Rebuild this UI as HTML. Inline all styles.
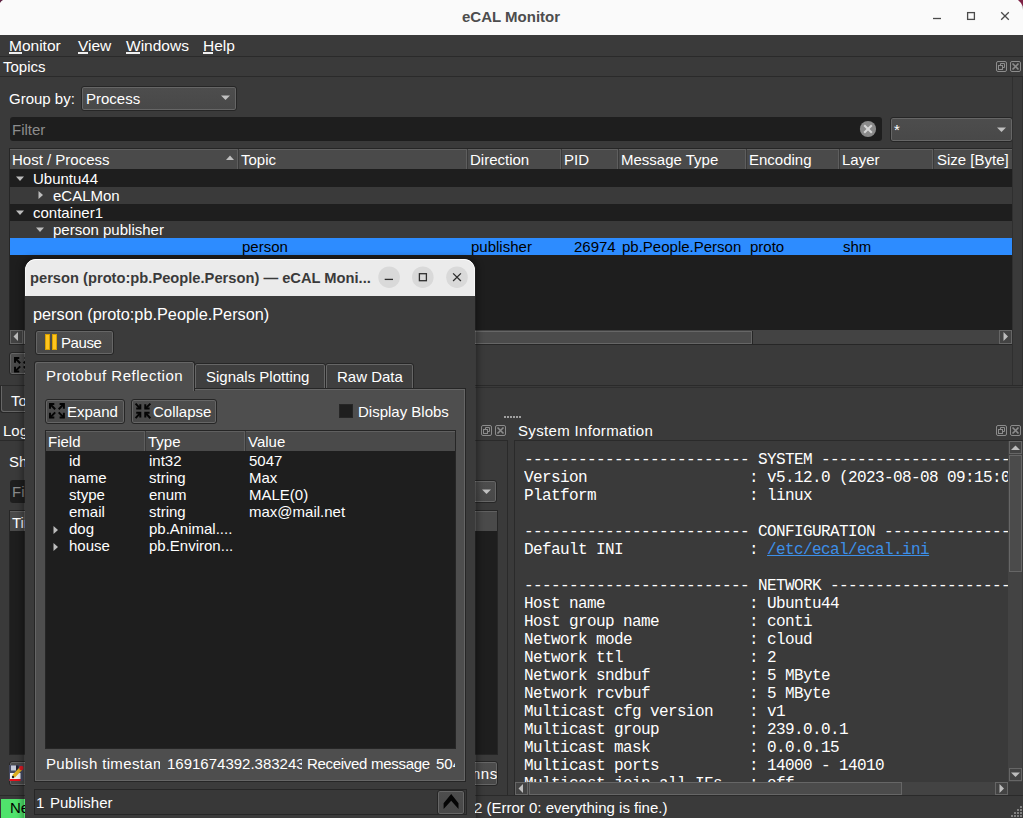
<!DOCTYPE html>
<html><head><meta charset="utf-8"><title>eCAL Monitor</title>
<style>
*{margin:0;padding:0;box-sizing:border-box}
html,body{width:1023px;height:818px;overflow:hidden;background:#3a3a3a;font-family:"Liberation Sans",sans-serif;font-size:15px;color:#fff}
.a{position:absolute}
.t{position:absolute;white-space:nowrap;line-height:17px}
.m{position:absolute;font-family:"Liberation Mono",monospace;font-size:16px;letter-spacing:-0.6px;line-height:18px;white-space:pre;overflow:hidden}
.btn{position:absolute;border:1px solid #262626;border-radius:3px;box-shadow:inset 0 0 0 1px #666666;background:linear-gradient(#4d4d4d,#484848)}
.hdr{position:absolute;background:#4a4a4a;box-shadow:inset 0 1px 0 #606060}
.dk{color:#000}
</style></head><body>
<div class="a" style="left:0px;top:0px;width:1023px;height:35px;background:#fafafa"></div>
<svg class="a" style="left:0px;top:0px" width="1023" height="12"><path d="M1018 0 L1023 0 L1023 7 Q1021.5 2.5 1018 0 Z" fill="#7d2245"/><path d="M1023 6 L1023 10 Q1022.5 8 1021.5 6.5 Z" fill="#999" opacity="0.5"/><path d="M0 0 L3 0 Q1 1 0 3 Z" fill="#5e2040"/></svg>
<div class="t" style="left:462px;top:8px;font-weight:bold;color:#4d4d4d">eCAL Monitor</div>
<svg class="a" style="left:925px;top:5px" width="95" height="25"><line x1="8" y1="13.5" x2="16" y2="13.5" stroke="#4a4a4a" stroke-width="1.3"/>
  <rect x="42.6" y="7.6" width="6.8" height="6.8" fill="none" stroke="#4a4a4a" stroke-width="1.3"/>
  <path d="M76.2 7.2 L83.8 14.8 M83.8 7.2 L76.2 14.8" stroke="#4a4a4a" stroke-width="1.3"/></svg>
<div class="a" style="left:0px;top:56px;width:1023px;height:1px;background:#2a2a2a"></div>
<div class="t" style="left:9px;top:37px;font-size:15.5px">Monitor</div>
<div class="a" style="left:9px;top:52px;width:13px;height:2px;background:#f0f0f0"></div>
<div class="t" style="left:78px;top:37px;font-size:15.5px">View</div>
<div class="a" style="left:78px;top:52px;width:10px;height:2px;background:#f0f0f0"></div>
<div class="t" style="left:126px;top:37px;font-size:15.5px">Windows</div>
<div class="a" style="left:126px;top:52px;width:14px;height:2px;background:#f0f0f0"></div>
<div class="t" style="left:203px;top:37px;font-size:15.5px">Help</div>
<div class="a" style="left:203px;top:52px;width:10px;height:2px;background:#f0f0f0"></div>
<div class="t" style="left:3px;top:58px;">Topics</div>
<div class="a" style="left:0px;top:76px;width:1023px;height:1px;background:#2a2a2a"></div>
<svg class="a" style="left:995px;top:60px" width="28" height="14"><g fill="none" stroke="#8c8c8c" stroke-width="1">
    <rect x="1.5" y="1.5" width="10" height="10" rx="1.5"/>
    <rect x="3.5" y="5.5" width="4" height="4"/>
    <path d="M5.5 5.5 V3.5 H9.5 V7.5 H7.5"/>
    <rect x="15.5" y="1.5" width="10" height="10" rx="1.5"/>
    <path d="M17.5 3.5 L23.5 9.5 M23.5 3.5 L17.5 9.5" stroke-width="1.6"/></g></svg>
<div class="t" style="left:9px;top:90px;">Group by:</div>
<div class="btn" style="left:81px;top:86px;width:156px;height:25px;"></div>
<div class="t" style="left:86px;top:90px;">Process</div>
<svg class="a" style="left:221px;top:95px" width="9" height="6"><path d="M0 0.5 H9 L4.5 5 Z" fill="#c0c0c0"/></svg>
<div class="a" style="left:10px;top:117px;width:872px;height:24px;background:#1e1e1e;border-radius:3px"></div>
<div class="t" style="left:12px;top:121px;color:#8c8c8c">Filter</div>
<svg class="a" style="left:859px;top:120px" width="18" height="18"><circle cx="9" cy="9" r="8.1" fill="#8a8a8a"/><path d="M5.2 5.2 L12.8 12.8 M12.8 5.2 L5.2 12.8" stroke="#d6d6d6" stroke-width="2.1"/></svg>
<div class="btn" style="left:890px;top:117px;width:123px;height:25px;"></div>
<div class="t" style="left:894px;top:121px;">*</div>
<svg class="a" style="left:997px;top:127px" width="9" height="6"><path d="M0 0.5 H9 L4.5 5 Z" fill="#c0c0c0"/></svg>
<div class="a" style="left:9px;top:148px;width:1004px;height:197px;background:#262626"></div>
<div class="a" style="left:10px;top:149px;width:1002px;height:181px;background:#1e1e1e"></div>
<div class="hdr" style="left:10px;top:149px;width:1002px;height:20px"></div>
<div class="a" style="left:237px;top:149px;width:1px;height:20px;background:#5e5e5e"></div>
<div class="a" style="left:238px;top:149px;width:1px;height:20px;background:#3a3a3a"></div>
<div class="a" style="left:466px;top:149px;width:1px;height:20px;background:#5e5e5e"></div>
<div class="a" style="left:467px;top:149px;width:1px;height:20px;background:#3a3a3a"></div>
<div class="a" style="left:560px;top:149px;width:1px;height:20px;background:#5e5e5e"></div>
<div class="a" style="left:561px;top:149px;width:1px;height:20px;background:#3a3a3a"></div>
<div class="a" style="left:617px;top:149px;width:1px;height:20px;background:#5e5e5e"></div>
<div class="a" style="left:618px;top:149px;width:1px;height:20px;background:#3a3a3a"></div>
<div class="a" style="left:745px;top:149px;width:1px;height:20px;background:#5e5e5e"></div>
<div class="a" style="left:746px;top:149px;width:1px;height:20px;background:#3a3a3a"></div>
<div class="a" style="left:838px;top:149px;width:1px;height:20px;background:#5e5e5e"></div>
<div class="a" style="left:839px;top:149px;width:1px;height:20px;background:#3a3a3a"></div>
<div class="a" style="left:932px;top:149px;width:1px;height:20px;background:#5e5e5e"></div>
<div class="a" style="left:933px;top:149px;width:1px;height:20px;background:#3a3a3a"></div>
<div class="t" style="left:12px;top:151px;">Host / Process</div>
<div class="t" style="left:241px;top:151px;">Topic</div>
<div class="t" style="left:470px;top:151px;">Direction</div>
<div class="t" style="left:564px;top:151px;">PID</div>
<div class="t" style="left:621px;top:151px;">Message Type</div>
<div class="t" style="left:749px;top:151px;">Encoding</div>
<div class="t" style="left:842px;top:151px;">Layer</div>
<div class="t" style="left:937px;top:151px;">Size [Byte]</div>
<svg class="a" style="left:226px;top:155px" width="8" height="6"><path d="M0 5 H8 L4.0 0.5 Z" fill="#c0c0c0"/></svg>
<div class="a" style="left:10px;top:169px;width:1002px;height:1px;background:#1e1e1e"></div>
<div class="a" style="left:10px;top:170px;width:1002px;height:17px;background:#1e1e1e"></div>
<div class="a" style="left:10px;top:187px;width:1002px;height:17px;background:#3a3a3a"></div>
<div class="a" style="left:10px;top:204px;width:1002px;height:17px;background:#1e1e1e"></div>
<div class="a" style="left:10px;top:221px;width:1002px;height:17px;background:#3a3a3a"></div>
<div class="a" style="left:10px;top:238px;width:1002px;height:17px;background:#2d8cff"></div>
<svg class="a" style="left:16px;top:176px" width="8" height="6"><path d="M0 0.5 H8 L4.0 5 Z" fill="#bdbdbd"/></svg>
<svg class="a" style="left:38px;top:191px" width="6" height="8"><path d="M0.5 0 V8 L5 4.0 Z" fill="#bdbdbd"/></svg>
<svg class="a" style="left:16px;top:210px" width="8" height="6"><path d="M0 0.5 H8 L4.0 5 Z" fill="#bdbdbd"/></svg>
<svg class="a" style="left:36px;top:227px" width="8" height="6"><path d="M0 0.5 H8 L4.0 5 Z" fill="#bdbdbd"/></svg>
<div class="t" style="left:33px;top:170px;">Ubuntu44</div>
<div class="t" style="left:53px;top:187px;">eCALMon</div>
<div class="t" style="left:33px;top:204px;">container1</div>
<div class="t" style="left:53px;top:221px;">person publisher</div>
<div class="t dk" style="left:242px;top:238px;">person</div>
<div class="t dk" style="left:471px;top:238px;">publisher</div>
<div class="t dk" style="left:574px;top:238px;">26974</div>
<div class="t dk" style="left:622px;top:238px;">pb.People.Person</div>
<div class="t dk" style="left:750px;top:238px;">proto</div>
<div class="t dk" style="left:843px;top:238px;">shm</div>
<div class="a" style="left:10px;top:330px;width:1002px;height:14px;background:#434343"></div>
<div class="a" style="left:10px;top:330px;width:13px;height:14px;background:#434343;box-shadow:inset 0 0 0 1px #666666"></div>
<svg class="a" style="left:13px;top:332px" width="6" height="9"><path d="M5 0 V9 L0.5 4.5 Z" fill="#bdbdbd"/></svg>
<div class="a" style="left:24px;top:331px;width:728px;height:13px;background:#4b4b4b;box-shadow:inset 0 0 0 1px #666666"></div>
<div class="a" style="left:752px;top:331px;width:1px;height:13px;background:#262626"></div>
<div class="a" style="left:999px;top:330px;width:13px;height:14px;background:#434343;box-shadow:inset 0 0 0 1px #666666"></div>
<svg class="a" style="left:1003px;top:332px" width="6" height="9"><path d="M0.5 0 V9 L5 4.5 Z" fill="#bdbdbd"/></svg>
<div class="a" style="left:1012px;top:77px;width:1px;height:309px;background:#2f2f2f"></div>
<div class="a" style="left:1022px;top:77px;width:1px;height:309px;background:#2f2f2f"></div>
<div class="btn" style="left:9px;top:352px;width:32px;height:23px;"></div>
<svg class="a" style="left:13px;top:356px" width="18" height="18"><g fill="none" stroke="#050505" stroke-width="2" stroke-linejoin="miter">
  <path d="M6.3 2 H2 V6.8"/><path d="M2 2 L7.2 7.2"/>
  <path d="M11.6 2 H15.9 V6.8"/><path d="M15.9 2 L10.7 7.2"/>
  <path d="M6.3 15.6 H2 V10.8"/><path d="M2 15.6 L7.2 10.4"/>
  <path d="M11.6 15.6 H15.9 V10.8"/><path d="M15.9 15.6 L10.7 10.4"/></g></svg>
<div class="a" style="left:0px;top:385px;width:1023px;height:1px;background:#2a2a2a"></div>
<div class="a" style="left:0px;top:387px;width:1023px;height:1px;background:#2e2e2e"></div>
<div class="a" style="left:0px;top:386px;width:90px;height:27px;background:#3b3b3b;border:1px solid #262626;border-top:none;box-shadow:inset 1px -1px 0 #666666,inset -1px 0 0 #666666;border-radius:0 0 3px 3px"></div>
<div class="t" style="left:11px;top:392px;">Topics</div>
<div class="t" style="left:3px;top:422px;">Logging</div>
<svg class="a" style="left:480px;top:424px" width="28" height="14"><g fill="none" stroke="#8c8c8c" stroke-width="1">
    <rect x="1.5" y="1.5" width="10" height="10" rx="1.5"/>
    <rect x="3.5" y="5.5" width="4" height="4"/>
    <path d="M5.5 5.5 V3.5 H9.5 V7.5 H7.5"/>
    <rect x="15.5" y="1.5" width="10" height="10" rx="1.5"/>
    <path d="M17.5 3.5 L23.5 9.5 M23.5 3.5 L17.5 9.5" stroke-width="1.6"/></g></svg>
<div class="a" style="left:0px;top:440px;width:508px;height:1px;background:#2a2a2a"></div>
<div class="a" style="left:507px;top:441px;width:1px;height:355px;background:#2a2a2a"></div>
<div class="t" style="left:9px;top:453px;">Show</div>
<div class="a" style="left:10px;top:480px;width:300px;height:23px;background:#1e1e1e;border-radius:3px"></div>
<div class="t" style="left:12px;top:483px;color:#8a8a8a">Filter</div>
<div class="btn" style="left:400px;top:480px;width:97px;height:23px;"></div>
<svg class="a" style="left:482px;top:489px" width="9" height="6"><path d="M0 0.5 H9 L4.5 5 Z" fill="#c0c0c0"/></svg>
<div class="a" style="left:9px;top:510px;width:489px;height:245px;background:#262626"></div>
<div class="a" style="left:10px;top:511px;width:487px;height:243px;background:#1e1e1e"></div>
<div class="hdr" style="left:10px;top:511px;width:487px;height:20px"></div>
<div class="t" style="left:12px;top:514px;">Time</div>
<div class="btn" style="left:400px;top:761px;width:98px;height:25px;"></div>
<div class="a" style="left:400px;top:761px;width:97px;height:24px;overflow:hidden"><div class="t" style="left:35px;top:4px;letter-spacing:0.5px">Columns</div></div>
<div class="btn" style="left:9px;top:761px;width:32px;height:25px;"></div>
<svg class="a" style="left:9px;top:765px" width="15" height="17"><rect x="0" y="0" width="14" height="16" fill="#454a62"/><rect x="2" y="0.5" width="5" height="5" fill="#c5cad8"/><rect x="7" y="0.5" width="2.5" height="5" fill="#1e2030"/><rect x="1" y="8" width="10.5" height="6" fill="#f2f2f2"/><rect x="0.5" y="14" width="11" height="2" fill="#e8101a"/><path d="M4.5 11.5 L12 3.5" stroke="#e0b020" stroke-width="3.5"/><circle cx="12.3" cy="3" r="2.2" fill="#e01b24"/><circle cx="4" cy="12" r="1.2" fill="#222"/></svg>
<svg class="a" style="left:503px;top:416px" width="20" height="3"><g fill="#a0a0a0"><rect x="1" y="0" width="2" height="2"/><rect x="4" y="0" width="2" height="2"/><rect x="7" y="0" width="2" height="2"/><rect x="10" y="0" width="2" height="2"/><rect x="13" y="0" width="2" height="2"/><rect x="16" y="0" width="2" height="2"/></g></svg>
<div class="t" style="left:518px;top:422px;letter-spacing:0.33px">System Information</div>
<svg class="a" style="left:995px;top:424px" width="28" height="14"><g fill="none" stroke="#8c8c8c" stroke-width="1">
    <rect x="1.5" y="1.5" width="10" height="10" rx="1.5"/>
    <rect x="3.5" y="5.5" width="4" height="4"/>
    <path d="M5.5 5.5 V3.5 H9.5 V7.5 H7.5"/>
    <rect x="15.5" y="1.5" width="10" height="10" rx="1.5"/>
    <path d="M17.5 3.5 L23.5 9.5 M23.5 3.5 L17.5 9.5" stroke-width="1.6"/></g></svg>
<div class="a" style="left:514px;top:440px;width:509px;height:1px;background:#2a2a2a"></div>
<div class="a" style="left:514px;top:441px;width:1px;height:355px;background:#2a2a2a"></div>
<div class="m" style="left:524px;top:451px;width:484px;height:331px">------------------------- SYSTEM -------------------------
Version                  : v5.12.0 (2023-08-08 09:15:00 +0200)
Platform                 : linux

------------------------- CONFIGURATION --------------------
Default INI              : <span style="color:#3d8fe8;text-decoration:underline">/etc/ecal/ecal.ini</span>

------------------------- NETWORK --------------------------
Host name                : Ubuntu44
Host group name          : conti
Network mode             : cloud
Network ttl              : 2
Network sndbuf           : 5 MByte
Network rcvbuf           : 5 MByte
Multicast cfg version    : v1
Multicast group          : 239.0.0.1
Multicast mask           : 0.0.0.15
Multicast ports          : 14000 - 14010
Multicast join all IFs   : off</div>
<div class="a" style="left:1008px;top:441px;width:14px;height:341px;background:#434343"></div>
<div class="a" style="left:1009px;top:441px;width:13px;height:13px;box-shadow:inset 0 0 0 1px #666666"></div>
<svg class="a" style="left:1011px;top:445px" width="9" height="6"><path d="M0 5 H9 L4.5 0.5 Z" fill="#bdbdbd"/></svg>
<div class="a" style="left:1009px;top:455px;width:13px;height:117px;background:#4b4b4b;box-shadow:inset 0 0 0 1px #666666"></div>
<div class="a" style="left:1009px;top:768px;width:13px;height:13px;box-shadow:inset 0 0 0 1px #666666"></div>
<svg class="a" style="left:1011px;top:772px" width="9" height="6"><path d="M0 0.5 H9 L4.5 5 Z" fill="#bdbdbd"/></svg>
<div class="a" style="left:515px;top:782px;width:493px;height:14px;background:#434343"></div>
<div class="a" style="left:515px;top:782px;width:13px;height:13px;box-shadow:inset 0 0 0 1px #666666"></div>
<svg class="a" style="left:518px;top:784px" width="6" height="9"><path d="M5 0 V9 L0.5 4.5 Z" fill="#bdbdbd"/></svg>
<div class="a" style="left:529px;top:782px;width:373px;height:13px;background:#4b4b4b;box-shadow:inset 0 0 0 1px #666666"></div>
<div class="a" style="left:995px;top:782px;width:13px;height:13px;box-shadow:inset 0 0 0 1px #666666"></div>
<svg class="a" style="left:999px;top:784px" width="6" height="9"><path d="M0.5 0 V9 L5 4.5 Z" fill="#bdbdbd"/></svg>
<div class="a" style="left:0px;top:795px;width:1023px;height:1px;background:#2a2a2a"></div>
<div class="a" style="left:1px;top:799px;width:80px;height:19px;background:#50e36c"></div>
<div class="t" style="left:10px;top:799px;color:#000">Network</div>
<div class="t" style="left:474px;top:799px;">2 (Error 0: everything is fine.)</div>
<svg class="a" style="left:1009px;top:803px" width="15" height="15"><g fill="#808080"><rect x="11" y="3" width="2" height="2"/><rect x="8" y="6" width="2" height="2"/><rect x="11" y="6" width="2" height="2"/><rect x="5" y="9" width="2" height="2"/><rect x="8" y="9" width="2" height="2"/><rect x="11" y="9" width="2" height="2"/><rect x="2" y="12" width="2" height="2"/><rect x="5" y="12" width="2" height="2"/><rect x="8" y="12" width="2" height="2"/><rect x="11" y="12" width="2" height="2"/></g></svg>
<div class="a" style="left:24px;top:259px;width:452px;height:570px;box-shadow:0 0 6px 2px rgba(0,0,0,0.35);border-radius:11px 11px 0 0;background:transparent"></div>
<div class="a" style="left:25px;top:259px;width:450px;height:570px;background:#3b3b3b;border-radius:11px 11px 0 0;overflow:hidden"><div class="a" style="left:0;top:0;width:450px;height:37px;background:#ebebeb;border-radius:11px 11px 0 0;box-shadow:inset 0 1px 0 #ffffff,inset 1px 0 0 #f6f6f6,inset -1px 0 0 #f6f6f6"></div></div>
<div class="t" style="left:30px;top:270px;font-weight:bold;color:#3a3a3a;font-size:14.7px">person (proto:pb.People.Person) — eCAL Moni...</div>
<svg class="a" style="left:377px;top:266px" width="92" height="23"><circle cx="12.1" cy="11.2" r="10.8" fill="#d9d9d9"/>
  <circle cx="45.8" cy="11.2" r="10.8" fill="#d9d9d9"/>
  <circle cx="80" cy="11.2" r="10.8" fill="#d9d9d9"/>
  <line x1="7.7" y1="13.4" x2="16" y2="13.4" stroke="#2e2e2e" stroke-width="1.3"/>
  <rect x="42.4" y="7.7" width="7" height="7" fill="none" stroke="#2e2e2e" stroke-width="1.3"/>
  <path d="M76.1 7.4 L83.9 15 M83.9 7.4 L76.1 15" stroke="#2e2e2e" stroke-width="1.3"/></svg>
<div class="t" style="left:33px;top:305px;font-size:16.3px;line-height:18px">person (proto:pb.People.Person)</div>
<div class="btn" style="left:35px;top:330px;width:79px;height:25px;"></div>
<div class="a" style="left:45px;top:334px;width:5px;height:16px;background:#ffc51f;box-shadow:inset 0 0 0 1px #d9a100"></div>
<div class="a" style="left:52px;top:334px;width:5px;height:16px;background:#ffc51f;box-shadow:inset 0 0 0 1px #d9a100"></div>
<div class="t" style="left:61px;top:334px;letter-spacing:-0.4px">Pause</div>
<div class="a" style="left:194px;top:363px;width:132px;height:27px;background:#3f3f3f;border:1px solid #262626;box-shadow:inset 0 0 0 1px #666666;border-radius:3px 3px 0 0"></div>
<div class="t" style="left:206px;top:368px;">Signals Plotting</div>
<div class="a" style="left:325px;top:363px;width:89px;height:27px;background:#3f3f3f;border:1px solid #262626;box-shadow:inset 0 0 0 1px #666666;border-radius:3px 3px 0 0"></div>
<div class="t" style="left:337px;top:368px;">Raw Data</div>
<div class="a" style="left:34px;top:388px;width:432px;height:394px;background:#4e4e4e;border:1px solid #262626;box-shadow:inset 0 0 0 1px #666666"></div>
<div class="a" style="left:34px;top:361px;width:161px;height:30px;background:#4e4e4e;border:1px solid #262626;border-bottom:none;box-shadow:inset 1px 1px 0 #666666,inset -1px 0 0 #666666;border-radius:3px 3px 0 0"></div>
<div class="t" style="left:46px;top:367px;letter-spacing:0.5px">Protobuf Reflection</div>
<div class="btn" style="left:45px;top:399px;width:80px;height:25px;"></div>
<svg class="a" style="left:48px;top:402px" width="18" height="18"><g fill="none" stroke="#050505" stroke-width="2" stroke-linejoin="miter">
  <path d="M6.3 2 H2 V6.8"/><path d="M2 2 L7.2 7.2"/>
  <path d="M11.6 2 H15.9 V6.8"/><path d="M15.9 2 L10.7 7.2"/>
  <path d="M6.3 15.6 H2 V10.8"/><path d="M2 15.6 L7.2 10.4"/>
  <path d="M11.6 15.6 H15.9 V10.8"/><path d="M15.9 15.6 L10.7 10.4"/></g></svg>
<div class="t" style="left:67px;top:403px;">Expand</div>
<div class="btn" style="left:131px;top:399px;width:86px;height:25px;"></div>
<svg class="a" style="left:134px;top:402px" width="18" height="18"><g fill="none" stroke="#050505" stroke-width="2" stroke-linejoin="miter">
  <path d="M6.3 2.2 V6.6 H2.2"/><path d="M1.6 1.6 L6.3 6.6"/>
  <path d="M11.3 2.2 V6.6 H15.6"/><path d="M16.4 1.6 L11.3 6.6"/>
  <path d="M6.3 15.4 V10.8 H2.2"/><path d="M1.6 16.2 L6.3 10.8"/>
  <path d="M11.3 15.4 V10.8 H15.6"/><path d="M16.4 16.2 L11.3 10.8"/></g></svg>
<div class="t" style="left:153px;top:403px;">Collapse</div>
<div class="a" style="left:339px;top:404px;width:14px;height:14px;background:#1e1e1e;border:1px solid #262626"></div>
<div class="t" style="left:358px;top:403px;">Display Blobs</div>
<div class="a" style="left:45px;top:430px;width:411px;height:319px;background:#262626"></div>
<div class="a" style="left:46px;top:431px;width:409px;height:317px;background:#1e1e1e"></div>
<div class="hdr" style="left:46px;top:431px;width:409px;height:20px"></div>
<div class="a" style="left:144px;top:431px;width:1px;height:20px;background:#5e5e5e"></div>
<div class="a" style="left:145px;top:431px;width:1px;height:20px;background:#3a3a3a"></div>
<div class="a" style="left:244px;top:431px;width:1px;height:20px;background:#5e5e5e"></div>
<div class="a" style="left:245px;top:431px;width:1px;height:20px;background:#3a3a3a"></div>
<div class="t" style="left:48px;top:433px;">Field</div>
<div class="t" style="left:148px;top:433px;">Type</div>
<div class="t" style="left:248px;top:433px;">Value</div>
<div class="t" style="left:69px;top:452px;">id</div>
<div class="t" style="left:149px;top:452px;">int32</div>
<div class="t" style="left:249px;top:452px;">5047</div>
<div class="t" style="left:69px;top:469px;">name</div>
<div class="t" style="left:149px;top:469px;">string</div>
<div class="t" style="left:249px;top:469px;">Max</div>
<div class="t" style="left:69px;top:486px;">stype</div>
<div class="t" style="left:149px;top:486px;">enum</div>
<div class="t" style="left:249px;top:486px;">MALE(0)</div>
<div class="t" style="left:69px;top:503px;">email</div>
<div class="t" style="left:149px;top:503px;">string</div>
<div class="t" style="left:249px;top:503px;">max@mail.net</div>
<div class="t" style="left:69px;top:520px;">dog</div>
<div class="t" style="left:149px;top:520px;">pb.Animal....</div>
<div class="t" style="left:249px;top:520px;"></div>
<div class="t" style="left:69px;top:537px;">house</div>
<div class="t" style="left:149px;top:537px;">pb.Environ...</div>
<div class="t" style="left:249px;top:537px;"></div>
<svg class="a" style="left:53px;top:526px" width="6" height="8"><path d="M0.5 0 V8 L5 4.0 Z" fill="#bdbdbd"/></svg>
<svg class="a" style="left:53px;top:543px" width="6" height="8"><path d="M0.5 0 V8 L5 4.0 Z" fill="#bdbdbd"/></svg>
<div class="t" style="left:46px;top:755px;width:114px;overflow:hidden;letter-spacing:0.35px">Publish timestamp</div>
<div class="t" style="left:167px;top:755px;width:135px;overflow:hidden">1691674392.383243</div>
<div class="t" style="left:307px;top:755px;width:127px;overflow:hidden;letter-spacing:-0.3px">Received message</div>
<div class="t" style="left:436px;top:755px;width:19px;overflow:hidden">5047</div>
<div class="a" style="left:34px;top:789px;width:433px;height:26px;background:#383838;border:1px solid #262626"></div>
<div class="t" style="left:36px;top:794px;">1</div>
<div class="t" style="left:50px;top:794px;">Publisher</div>
<div class="btn" style="left:437px;top:790px;width:28px;height:25px;"></div>
<svg class="a" style="left:434px;top:786px" width="36" height="32"><path d="M17.2 8 L24.5 17.2 V23.1 L17.2 14.7 L9.6 23.1 V17.2 Z" fill="#050505"/></svg>
</body></html>
